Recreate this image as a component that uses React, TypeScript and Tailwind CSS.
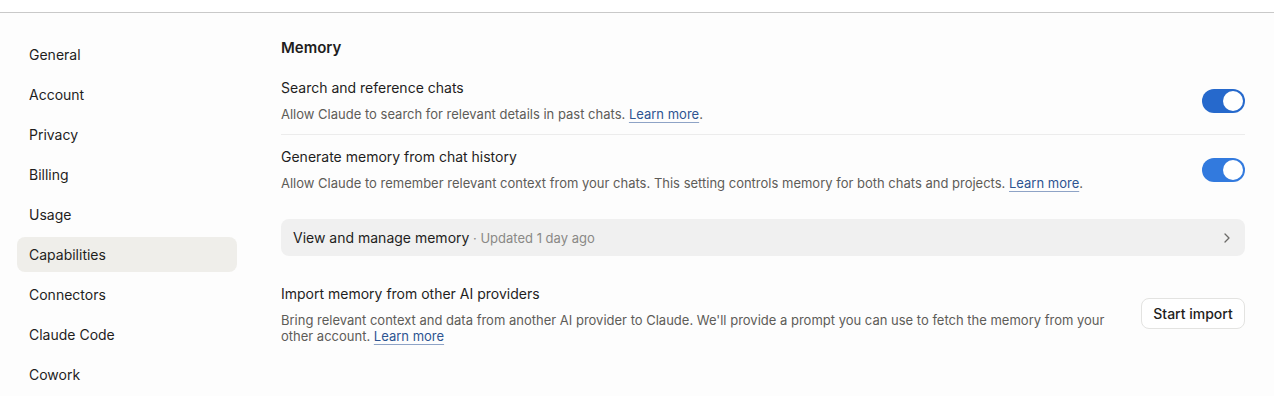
import { FC } from "react";

const navItems = [
  "General",
  "Account",
  "Privacy",
  "Billing",
  "Usage",
  "Capabilities",
  "Connectors",
  "Claude Code",
  "Cowork",
];

const Toggle: FC<{ tone: string }> = ({ tone }) => (
  <div className={`relative h-6 w-[43px] shrink-0 rounded-full ${tone}`}>
    <div className="absolute right-[2px] top-[2px] h-5 w-5 rounded-full bg-white" />
  </div>
);

const LearnMore: FC = () => (
  <span className="text-[#2d5491] underline decoration-[#8ea3c6] underline-offset-[3px]">
    Learn more
  </span>
);

export default function App() {
  return (
    <div
      className="h-[396px] w-[1274px] overflow-hidden bg-[#fdfdfd] text-[#1f1e1d]"
      style={{ fontFamily: "Inter, 'Noto Sans', sans-serif" }}
    >
      <div className="h-[13px] border-b border-[#c9c9c9] bg-white" />
      <div className="flex pt-6">
        <nav className="flex w-[281px] shrink-0 flex-col gap-[5px] pl-[17px] pr-[44px]">
          {navItems.map((item) => (
            <div
              key={item}
              className={`flex h-[35px] items-center rounded-lg px-3 text-[14px] ${
                item === "Capabilities" ? "bg-[#efeeea]" : ""
              }`}
            >
              {item}
            </div>
          ))}
        </nav>

        <main className="mt-px flex-1 pr-[29px]">
          <h2 className="h-5 text-[15px] font-semibold leading-5">Memory</h2>

          <div className="mt-5 flex items-center justify-between border-b border-[#ececec] pb-[11px]">
            <div>
              <div className="text-[14px] leading-5">Search and reference chats</div>
              <div className="mt-[7px] text-[13px] leading-[18px] text-[#5d5c58]">
                Allow Claude to search for relevant details in past chats. <LearnMore />.
              </div>
            </div>
            <Toggle tone="bg-[#2669cc]" />
          </div>

          <div className="mt-[12px] flex items-center justify-between">
            <div>
              <div className="text-[14px] leading-5">Generate memory from chat history</div>
              <div className="mt-[7px] text-[13px] leading-[18px] text-[#5d5c58]">
                Allow Claude to remember relevant context from your chats. This setting controls memory for both
                chats and projects. <LearnMore />.
              </div>
            </div>
            <Toggle tone="bg-[#327ade]" />
          </div>

          <div className="mt-[27px] flex h-[37px] items-center justify-between rounded-lg bg-[#f0f0f0] px-3">
            <div className="text-[14px]">
              View and manage memory
              <span className="text-[13px] text-[#8a8986]"> · Updated 1 day ago</span>
            </div>
            <svg width="16" height="16" viewBox="0 0 16 16" fill="none" className="-mr-0.5">
              <path d="M6 4l4 4-4 4" stroke="#6b6a67" strokeWidth="1.3" strokeLinecap="round" strokeLinejoin="round" />
            </svg>
          </div>

          <div className="mt-[28px] flex items-center justify-between gap-6">
            <div className="max-w-[836px]">
              <div className="text-[14px] leading-5">Import memory from other AI providers</div>
              <div className="mt-2 text-[13px] leading-4 text-[#5d5c58]">
                Bring relevant context and data from another AI provider to Claude. We'll provide a prompt you can
                use to fetch the memory from your other account. <LearnMore />
              </div>
            </div>
            <button className="-mt-0.5 h-[31px] w-[104px] shrink-0 rounded-lg border border-[#e3e3e1] bg-white text-[14px] font-medium">
              Start import
            </button>
          </div>
        </main>
      </div>
    </div>
  );
}
